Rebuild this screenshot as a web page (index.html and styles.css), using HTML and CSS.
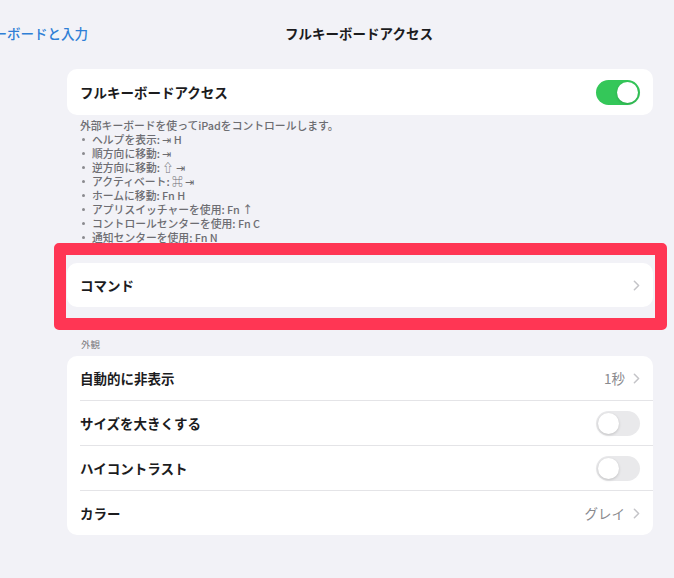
FILE: index.html
```html
<!DOCTYPE html>
<html lang="ja">
  <head>
    <meta charset="UTF-8" />
    <meta name="viewport" content="width=device-width, initial-scale=1.0" />
    <title>フルキーボードアクセス</title>
    <link rel="stylesheet" href="styles.css">
  </head>
  <body>
    <header class="nav">
      <a class="nav-back" href="#">キーボードと入力</a>
      <h1 class="nav-title">フルキーボードアクセス</h1>
    </header>

    <main class="settings">
      <div class="card">
        <div class="row">
          <span class="row-label">フルキーボードアクセス</span>
          <span class="switch on"><span class="knob"></span></span>
        </div>
      </div>

      <div class="footnote">
        <p>外部キーボードを使ってiPadをコントロールします。</p>
        <ul>
          <li>ヘルプを表示: ⇥ H</li>
          <li>順方向に移動: ⇥</li>
          <li>逆方向に移動: ⇧ ⇥</li>
          <li>アクティベート: ⌘ ⇥</li>
          <li>ホームに移動: Fn H</li>
          <li>アプリスイッチャーを使用: Fn ↑</li>
          <li>コントロールセンターを使用: Fn C</li>
          <li>通知センターを使用: Fn N</li>
        </ul>
      </div>

      <div class="card card-commands">
        <div class="row">
          <span class="row-label">コマンド</span>
          <span class="row-detail">
            <svg class="chevron" viewBox="0 0 8 13"><path d="M1.5 1.5 L6.5 6.5 L1.5 11.5" /></svg>
          </span>
        </div>
        <div class="highlight"></div>
      </div>

      <h2 class="section-title">外観</h2>
      <div class="card">
        <div class="row">
          <span class="row-label">自動的に非表示</span>
          <span class="row-detail">
            <span class="row-value">1秒</span>
            <svg class="chevron" viewBox="0 0 8 13"><path d="M1.5 1.5 L6.5 6.5 L1.5 11.5" /></svg>
          </span>
        </div>
        <div class="row">
          <span class="row-label">サイズを大きくする</span>
          <span class="switch"><span class="knob"></span></span>
        </div>
        <div class="row">
          <span class="row-label">ハイコントラスト</span>
          <span class="switch"><span class="knob"></span></span>
        </div>
        <div class="row">
          <span class="row-label">カラー</span>
          <span class="row-detail">
            <span class="row-value">グレイ</span>
            <svg class="chevron" viewBox="0 0 8 13"><path d="M1.5 1.5 L6.5 6.5 L1.5 11.5" /></svg>
          </span>
        </div>
      </div>
    </main>
  </body>
</html>
```

FILE: styles.css
```css
body {
  margin: 0;
  padding: 0;
  background: #f2f2f7;
  font-family: "Noto Sans CJK JP", "Noto Sans", sans-serif;
  color: #1c1c1e;
  overflow: hidden;
}
.nav {
  height: 66px;
  display: flex;
  align-items: center;
  position: relative;
}
.nav-back {
  margin-left: -20px;
  font-size: 13.5px;
  font-weight: 500;
  color: #2f7fd6;
  text-decoration: none;
}
.nav-title {
  position: absolute;
  left: 0;
  right: 0;
  margin: 0 auto;
  width: fit-content;
  font-size: 13.5px;
  font-weight: 700;
  transform: translateX(22px);
}
.settings {
  padding: 3px 21px 0 67px;
}
.card {
  background: #fff;
  border-radius: 10px;
}
.row {
  height: 44px;
  margin-left: 13px;
  padding-right: 13px;
  display: flex;
  align-items: center;
  justify-content: space-between;
}
.row + .row {
  border-top: 1px solid #e4e4e7;
}
.card:first-child .row {
  height: 46px;
}
.row-label {
  font-size: 13.5px;
  font-weight: 600;
}
.row-detail {
  display: flex;
  align-items: center;
  gap: 8px;
}
.row-value {
  font-size: 13.5px;
  color: #8a8a8e;
}
.chevron {
  width: 7px;
  height: 11px;
  fill: none;
  stroke: #c4c4c8;
  stroke-width: 1.8;
  stroke-linecap: round;
  stroke-linejoin: round;
}
.switch {
  width: 44px;
  height: 25px;
  border-radius: 13px;
  background: #e9e9eb;
  display: flex;
  align-items: center;
  padding: 0 2px;
  box-sizing: border-box;
}
.switch .knob {
  width: 21px;
  height: 21px;
  border-radius: 50%;
  background: #fff;
  box-shadow: 0 1px 3px rgba(0, 0, 0, 0.18);
}
.switch.on {
  background: #34c759;
  justify-content: flex-end;
}
.footnote {
  padding: 3px 0 0 13px;
  font-size: 10.8px;
  line-height: 14px;
  color: #6d6d72;
  font-weight: 500;
}
.footnote p {
  margin: 0;
}
.footnote ul {
  margin: 0;
  padding: 0;
  list-style: none;
}
.footnote li {
  display: flex;
  align-items: center;
  height: 14px;
  white-space: pre;
}
.footnote li::before {
  content: "";
  width: 3px;
  height: 3px;
  border-radius: 50%;
  background: #8a8a8e;
  margin: 1px 7px 0 2px;
  flex-shrink: 0;
}
.card-commands {
  margin-top: 19px;
  position: relative;
}
.card-commands .row {
  height: 44px;
}
.highlight {
  position: absolute;
  top: -20px;
  left: -13px;
  right: -14px;
  bottom: -23px;
  border: 12px solid #ff3654;
  border-radius: 5px;
}
.section-title {
  margin: 31px 0 6px 14px;
  font-size: 9.5px;
  line-height: 12px;
  font-weight: 400;
  color: #7c7c80;
}
```
